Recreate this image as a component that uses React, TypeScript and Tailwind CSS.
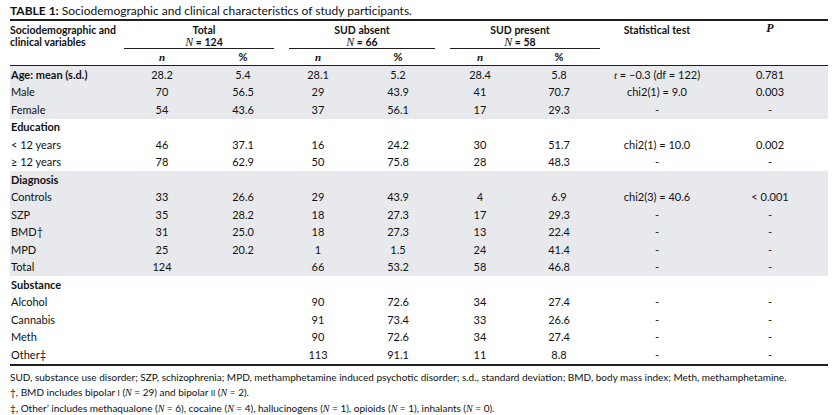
import React from "react";

const W = [112, 80, 82, 68, 92, 72, 86, 110, 116];

type Row = {
  label: string;
  bold?: boolean;
  vals?: (React.ReactNode)[];
  gray: boolean;
};

const serifI: React.CSSProperties = { fontFamily: '"Liberation Serif", serif' };

const T = (
  <>
    <span className="italic" style={serifI}>t</span> = −0.3 (df = 122)
  </>
);

const rows: Row[] = [
  { label: "Age: mean (s.d.)", bold: true, gray: true, vals: ["28.2", "5.4", "28.1", "5.2", "28.4", "5.8", T, "0.781"] },
  { label: "Male", gray: true, vals: ["70", "56.5", "29", "43.9", "41", "70.7", "chi2(1) = 9.0", "0.003"] },
  { label: "Female", gray: true, vals: ["54", "43.6", "37", "56.1", "17", "29.3", "-", "-"] },
  { label: "Education", bold: true, gray: false },
  { label: "< 12 years", gray: false, vals: ["46", "37.1", "16", "24.2", "30", "51.7", "chi2(1) = 10.0", "0.002"] },
  { label: "≥ 12 years", gray: false, vals: ["78", "62.9", "50", "75.8", "28", "48.3", "-", "-"] },
  { label: "Diagnosis", bold: true, gray: true },
  { label: "Controls", gray: true, vals: ["33", "26.6", "29", "43.9", "4", "6.9", "chi2(3) = 40.6", "< 0.001"] },
  { label: "SZP", gray: true, vals: ["35", "28.2", "18", "27.3", "17", "29.3", "-", "-"] },
  { label: "BMD†", gray: true, vals: ["31", "25.0", "18", "27.3", "13", "22.4", "-", "-"] },
  { label: "MPD", gray: true, vals: ["25", "20.2", "1", "1.5", "24", "41.4", "-", "-"] },
  { label: "Total", gray: true, vals: ["124", "", "66", "53.2", "58", "46.8", "-", "-"] },
  { label: "Substance", bold: true, gray: false },
  { label: "Alcohol", gray: false, vals: ["", "", "90", "72.6", "34", "27.4", "-", "-"] },
  { label: "Cannabis", gray: false, vals: ["", "", "91", "73.4", "33", "26.6", "-", "-"] },
  { label: "Meth", gray: false, vals: ["", "", "90", "72.6", "34", "27.4", "-", "-"] },
  { label: "Other‡", gray: false, vals: ["", "", "113", "91.1", "11", "8.8", "-", "-"] },
];

function NI() {
  return <span className="italic font-normal text-[12px]" style={serifI}>N</span>;
}

function FN() {
  return <span className="italic" style={serifI}>N</span>;
}

export default function App() {
  return (
    <div
      className="w-[834px] h-[415px] bg-white text-[#111111] overflow-hidden"
      style={{ fontFamily: 'Lato, "Liberation Sans", sans-serif' }}
    >
      <div className="pl-[10px] pr-[6px]">
        <div className="h-[19px] pt-[3px] text-[12px] leading-[15px]">
          <span className="font-bold">TABLE 1:</span> Sociodemographic and clinical characteristics of study participants.
        </div>
        <div className="border-t-2 border-[#231f20]" />
        {/* header */}
        <div className="flex h-[28px] text-[10.5px] font-bold leading-[12px]">
          <div className="w-[112px] pt-[3px]">
            Sociodemographic and
            <br />
            clinical variables
          </div>
          <div className="w-[162px] pl-[2px] pr-[10px] flex flex-col">
            <div className="flex-1 border-b border-[#231f20] text-center pl-[10px] pt-[3px]">
              Total
              <br />
              <NI /> = 124
            </div>
          </div>
          <div className="w-[160px] pl-[5px] pr-[9px] flex flex-col">
            <div className="flex-1 border-b border-[#231f20] text-center pt-[3px]">
              SUD absent
              <br />
              <NI /> = 66
            </div>
          </div>
          <div className="w-[158px] pl-[6px] pr-[2px] flex flex-col">
            <div className="flex-1 border-b border-[#231f20] text-center pr-[10px] pt-[3px]">
              SUD present
              <br />
              <NI /> = 58
            </div>
          </div>
          <div className="w-[110px] text-center pt-[3px]">Statistical test</div>
          <div className="w-[116px] text-center pt-[1px]">
            <span className="italic text-[12px]" style={serifI}>P</span>
          </div>
        </div>
        {/* subheader */}
        <div className="flex h-[17px] items-center border-b border-[#231f20] text-[11px]">
          <div className="w-[112px]" />
          {["n", "%", "n", "%", "n", "%"].map((s, i) => (
            <div key={i} className="text-center font-bold" style={{ width: W[i + 1] }}>
              {s === "n" ? (
                <span className="italic" style={serifI}>n</span>
              ) : (
                s
              )}
            </div>
          ))}
          <div className="w-[110px]" />
          <div className="w-[116px]" />
        </div>
        {/* body */}
        <div className="border-b-2 border-[#231f20]">
          {rows.map((r, idx) => (
            <div
              key={idx}
              className={`flex h-[17.5px] items-center text-[11px] ${r.gray ? "bg-[#e8e9ed]" : "bg-white"}`}
            >
              <div className={`w-[112px] pl-[1px] whitespace-nowrap ${r.bold ? "font-bold" : ""}`}>{r.label}</div>
              {r.vals &&
                r.vals.map((v, i) => (
                  <div key={i} className="text-center whitespace-nowrap" style={{ width: W[i + 1] }}>
                    {v}
                  </div>
                ))}
            </div>
          ))}
        </div>
        {/* footnotes */}
        <div className="text-[10px] leading-[15px] pt-[4px]">
          <div>
            SUD, substance use disorder; SZP, schizophrenia; MPD, methamphetamine induced psychotic disorder; s.d., standard deviation; BMD, body mass index; Meth, methamphetamine.
          </div>
          <div>
            †, BMD includes bipolar <span className="text-[8px]">I</span> (<FN /> = 29) and bipolar{" "}
            <span className="text-[8px]">II</span> (<FN /> = 2).
          </div>
          <div>
            ‡, Other’ includes methaqualone (<FN /> = 6), cocaine (<FN /> = 4), hallucinogens (<FN /> = 1), opioids (<FN /> = 1), inhalants (<FN /> = 0).
          </div>
        </div>
      </div>
    </div>
  );
}
